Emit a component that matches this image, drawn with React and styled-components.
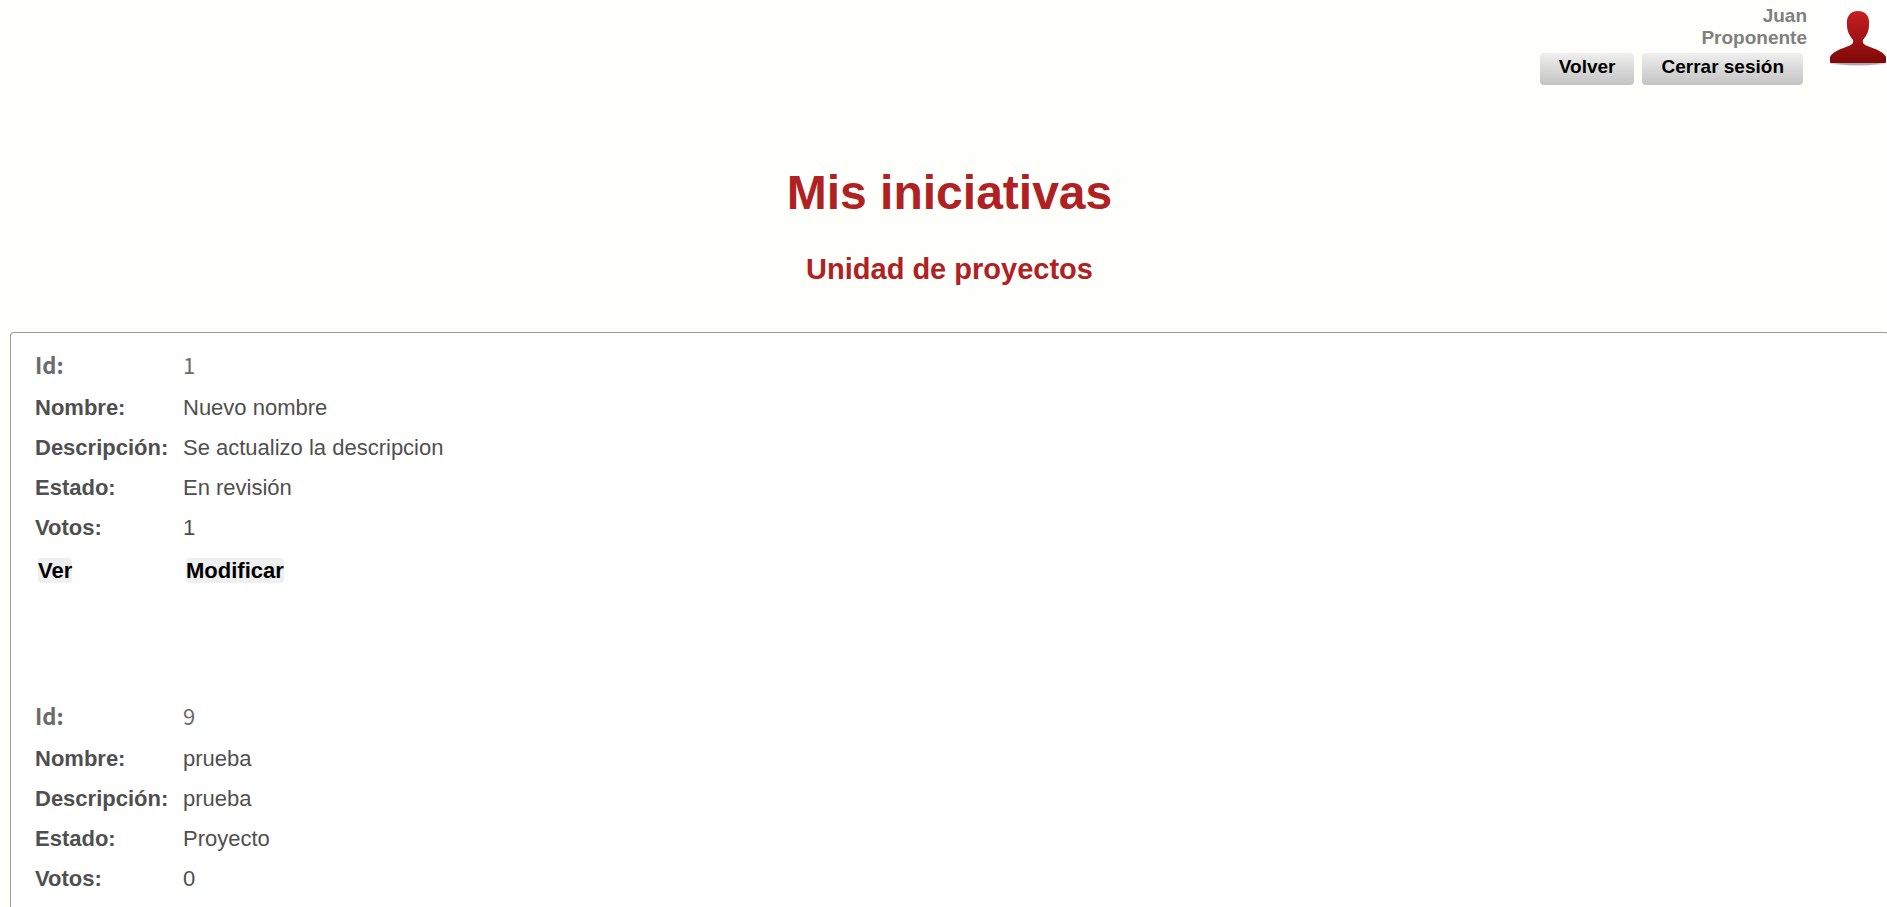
import React from "react";
import styled, { createGlobalStyle } from "styled-components";

const GlobalStyle = createGlobalStyle`
  body {
    margin: 0;
    background: #fefffa;
    color: #4f4f4f;
    font-family: "Liberation Sans", Arial, sans-serif;
    font-size: 22px;
    overflow-x: hidden;
  }
`;

const Page = styled.div`
  display: flex;
  flex-direction: column;
  min-height: 100vh;
  margin: 0 -2px 0 10px;
`;

const Header = styled.header`
  display: flex;
  justify-content: flex-end;
  align-items: flex-start;
  gap: 16px;
  height: 96px;
`;

const Session = styled.div`
  padding-top: 5px;
  text-align: right;
`;

const UserName = styled.div`
  color: #808080;
  font-size: 19px;
  font-weight: bold;
  line-height: 22px;
`;

const Actions = styled.div`
  display: flex;
  justify-content: flex-end;
  gap: 8px;
  padding: 4px 4px 0 0;
`;

const HeaderButton = styled.button`
  height: 32px;
  padding: 0 19px 4px;
  border: 0;
  border-radius: 4px;
  background: linear-gradient(#efefef, #c3c3c3);
  color: #000;
  font: bold 19px "Liberation Sans", Arial, sans-serif;
  cursor: pointer;
`;

const Avatar = styled.svg`
  display: block;
  width: 66px;
  height: 72px;
  background: #fff;
`;

const Headings = styled.div`
  padding-top: 65px;
  text-align: center;
  color: #b02124;
`;

const Title = styled.h1`
  margin: 0;
  font-size: 48px;
  line-height: 64px;
`;

const Subtitle = styled.h2`
  margin: 24px 0 0;
  font-size: 29px;
  line-height: 40px;
`;

const Panel = styled.main`
  flex: 1;
  margin-top: 43px;
  padding: 7px 20px 0 24px;
  border: 1px solid #9c9c9c;
  border-bottom: 0;
  border-radius: 4px 4px 0 0;
  background: #fff;
`;

const Initiative = styled.table`
  border-collapse: collapse;

  & + & {
    margin-top: 98px;
  }
`;

const Row = styled.tr`
  height: ${(p) => (p.$actions ? 45 : 40)}px;
  line-height: 24px;
  ${(p) => p.$lead && `
    height: 48px;
    color: #6b6b6b;
    font-family: "Noto Sans CJK SC", sans-serif;
  `}
`;

const Label = styled.th`
  padding: 0;
  width: 148px;
  text-align: left;
  font-weight: bold;
`;

const Value = styled.td`
  padding: 0;
`;

const LinkButton = styled.button`
  margin: 0 3px;
  padding: 0;
  border: 0;
  border-radius: 4px;
  background: #efefef;
  color: #000;
  font: bold 22px/25px "Liberation Sans", Arial, sans-serif;
  cursor: pointer;
`;

const initiatives = [
  { id: 1, nombre: "Nuevo nombre", descripcion: "Se actualizo la descripcion", estado: "En revisión", votos: 1, editable: true },
  { id: 9, nombre: "prueba", descripcion: "prueba", estado: "Proyecto", votos: 0, editable: false },
];

function InitiativeTable({ item }) {
  return (
    <Initiative>
      <tbody>
        <Row $lead><Label scope="row">Id:</Label><Value>{item.id}</Value></Row>
        <Row><Label scope="row">Nombre:</Label><Value>{item.nombre}</Value></Row>
        <Row><Label scope="row">Descripción:</Label><Value>{item.descripcion}</Value></Row>
        <Row><Label scope="row">Estado:</Label><Value>{item.estado}</Value></Row>
        <Row><Label scope="row">Votos:</Label><Value>{item.votos}</Value></Row>
        {item.editable && (
          <Row $actions>
            <Value><LinkButton type="button">Ver</LinkButton></Value>
            <Value><LinkButton type="button">Modificar</LinkButton></Value>
          </Row>
        )}
      </tbody>
    </Initiative>
  );
}

export default function App() {
  return (
    <>
      <GlobalStyle />
      <Page>
        <Header>
          <Session>
            <UserName>Juan</UserName>
            <UserName>Proponente</UserName>
            <Actions>
              <HeaderButton type="button">Volver</HeaderButton>
              <HeaderButton type="button">Cerrar sesión</HeaderButton>
            </Actions>
          </Session>
          <Avatar viewBox="0 0 66 72" aria-hidden="true">
            <defs>
              <linearGradient id="person" x1="0" y1="0" x2="0" y2="1">
                <stop offset="0" stopColor="#c62022" />
                <stop offset="1" stopColor="#800808" />
              </linearGradient>
              <radialGradient id="shadow">
                <stop offset="0.6" stopColor="#aaa" />
                <stop offset="1" stopColor="#fff" />
              </radialGradient>
            </defs>
            <ellipse cx="35" cy="63" rx="31" ry="3" fill="url(#shadow)" />
            <path
              d="M35 11C43 11 47 17 46 25C46 32 43 36 40 40C39 44 42 45 47 47C56 50 61 53 63 57V62Q63 63 62 63H8Q7 63 7 62V57C9 53 14 50 23 47C28 45 31 44 30 40C27 36 24 32 24 25C23 17 27 11 35 11Z"
              fill="url(#person)"
            />
          </Avatar>
        </Header>
        <Headings>
          <Title>Mis iniciativas</Title>
          <Subtitle>Unidad de proyectos</Subtitle>
        </Headings>
        <Panel>
          {initiatives.map((item) => (
            <InitiativeTable key={item.id} item={item} />
          ))}
        </Panel>
      </Page>
    </>
  );
}
